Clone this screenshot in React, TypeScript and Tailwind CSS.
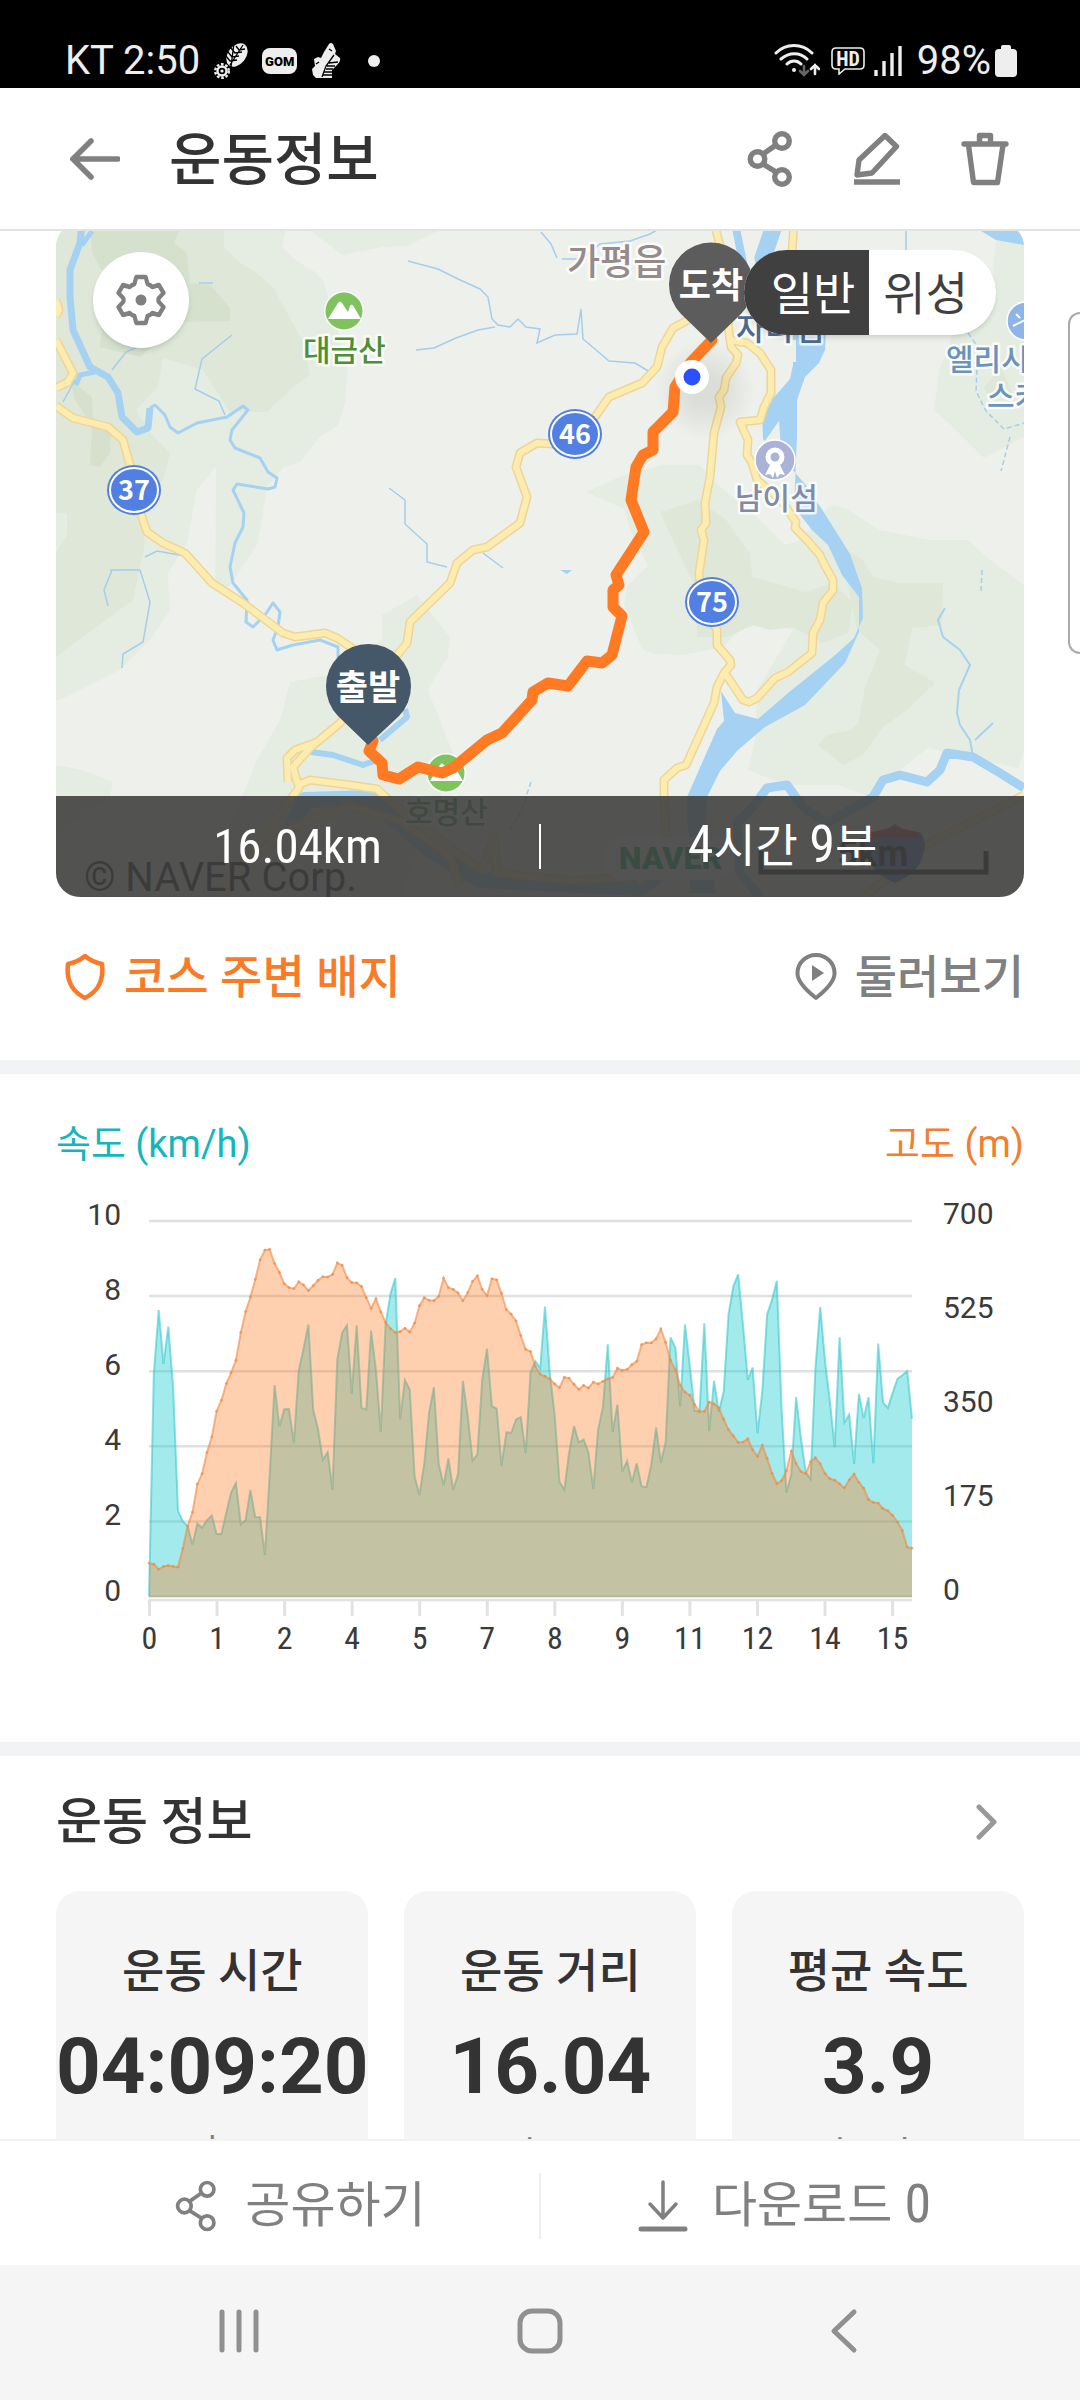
import type { ReactNode } from "react";

const TEXT = "font-['Roboto','Noto_Sans_CJK_KR',sans-serif]";
const NARROW = "font-['Liberation_Sans_Narrow','Roboto_Condensed','Roboto',sans-serif]";

// Samples along the course, measured down from the top of the chart
const SPEED = [
  1366, 755, 578, 726, 623, 790, 1130, 1159, 1172, 1223, 1165, 1177, 1156, 1143, 1194, 1194, 1135, 1080, 1054, 1167,
  1156, 1073, 1147, 1148, 1252, 1030, 784, 898, 851, 850, 944, 745, 685, 618, 852, 905, 990, 968, 1073, 713, 640, 619,
  808, 620, 847, 852, 634, 745, 914, 618, 533, 490, 879, 770, 797, 1035, 1087, 1000, 860, 790, 1000, 1060, 986, 1073,
  1028, 773, 870, 992, 975, 770, 684, 842, 849, 1007, 914, 916, 879, 872, 972, 750, 718, 738, 568, 752, 865, 1050,
  1073, 970, 897, 942, 934, 970, 1070, 907, 845, 672, 914, 838, 1022, 993, 1052, 1000, 1063, 1065, 1005, 901, 997,
  940, 653, 682, 843, 617, 735, 855, 857, 614, 911, 773, 858, 802, 590, 513, 480, 620, 770, 736, 917, 802, 590, 550,
  497, 850, 1080, 1030, 817, 930, 1025, 1043, 740, 570, 720, 830, 955, 653, 887, 865, 1001, 808, 876, 818, 1000, 670,
  832, 847, 805, 767, 757, 746, 877,
];

const ELEVATION = [
  1274, 1277, 1291, 1283, 1281, 1283, 1285, 1234, 1172, 1134, 1057, 1028, 970, 927, 856, 826, 780, 750, 716, 640, 582,
  542, 494, 440, 413, 411, 450, 474, 505, 516, 519, 500, 509, 524, 511, 496, 486, 487, 480, 448, 455, 489, 502, 503,
  513, 544, 573, 547, 583, 612, 629, 640, 637, 628, 638, 614, 566, 544, 551, 552, 540, 490, 516, 521, 531, 552, 530,
  499, 484, 521, 538, 492, 495, 532, 577, 589, 608, 648, 686, 692, 733, 754, 760, 767, 781, 791, 763, 765, 782, 796,
  785, 792, 776, 781, 774, 767, 763, 738, 744, 741, 728, 719, 673, 668, 668, 657, 630, 667, 716, 742, 785, 804, 812,
  838, 857, 857, 831, 836, 847, 878, 907, 924, 942, 941, 932, 962, 980, 950, 986, 1027, 1055, 1047, 1020, 966, 1000,
  1022, 1028, 995, 984, 1001, 1028, 1042, 1046, 1056, 1067, 1045, 1029, 1052, 1068, 1099, 1107, 1109, 1124, 1130,
  1143, 1161, 1184, 1230, 1233,
];

const SAMPLE_SCALE = 2.751;
const LEFT = 149;
const RIGHT = 912;
const BASE = 497;
const X_LABELS = ["0", "1", "2", "4", "5", "7", "8", "9", "11", "12", "14", "15"];
const SPEED_LABELS = ["10", "8", "6", "4", "2", "0"];
const ELEVATION_LABELS = ["700", "525", "350", "175", "0"];

const toPoints = (samples: number[]) =>
  samples.map((value, i) => [LEFT + (i * (RIGHT - LEFT)) / (samples.length - 1), value / SAMPLE_SCALE]);

const toLine = (points: number[][]) => points.map(([x, y]) => `${x.toFixed(1)},${y.toFixed(1)}`).join(" ");

const ShareIcon = ({ className = "", stroke = 5 }: { className?: string; stroke?: number }) => (
  <svg viewBox="0 0 46 56" fill="none" stroke="currentColor" strokeWidth={stroke} className={className}>
    <path d="M16 23 29 14M16 33l13 8" />
    <circle cx="10.5" cy="28" r="7.3" />
    <circle cx="35" cy="10" r="7.3" />
    <circle cx="35" cy="46" r="7.3" />
  </svg>
);

const StatusBar = () => (
  <div className={`flex shrink-0 items-center justify-between bg-black pt-[35px] pr-[63px] pb-px pl-[65px] text-[#eee] ${TEXT}`}>
    <div className="flex items-center">
      <span className="text-[40px] leading-[52px]">KT 2:50</span>
      {/* shoe sole with gear */}
      <svg viewBox="0 0 36 36" className="ml-[14px] h-9 w-9">
        <ellipse cx="23" cy="12" rx="9" ry="13" transform="rotate(38 23 12)" fill="#eee" />
        <path
          d="M17 5l4 5 7-1M14 9l4 5 7-1M12 13l4 5 7-1M22 3l3 4 6-1M20 0l-3 24M29 2 16 22"
          stroke="#000"
          strokeWidth="1.3"
          fill="none"
        />
        <circle cx="8" cy="28" r="4.5" fill="none" stroke="#eee" strokeWidth="2.4" />
        <circle cx="8" cy="28" r="6.8" fill="none" stroke="#eee" strokeWidth="2.4" strokeDasharray="2.6 1.8" />
        <circle cx="8" cy="28" r="1.6" fill="#eee" />
      </svg>
      <span className="ml-3 flex h-[26px] w-[35px] items-center justify-center rounded-lg bg-[#eee] text-[13px] leading-none font-black text-black">
        GOM
      </span>
      {/* running shoe */}
      <svg viewBox="0 0 30 36" className="ml-[15px] h-9 w-[30px]">
        <path d="M17 1q2-2 4 0l3 7-1 3 5 4q1 4-3 7l-5 5v8H4l-3-3-1-6 3-3-1-7 4-2 3 1 3-6z" fill="#eee" />
        <path d="M22 12l-8 11-4 11M17 20l9-1M15 23l8 0M14 26l7 0M12 29l8 0M11 32l9 0M17 6l3 2M4 21l3-2" stroke="#000" strokeWidth="1.3" fill="none" />
      </svg>
      <span className="ml-[26px] h-3 w-3 rounded-full bg-[#eee]" />
    </div>
    <div className="flex items-center">
      <svg viewBox="0 0 46 34" className="h-[34px] w-[46px]" fill="none" stroke="#eee" strokeWidth="3" strokeLinecap="round">
        <path d="M2 9c10-10 26-10 36 0M7 15c8-7 19-7 26 0M13 20c4-4 10-4 14 0" />
        <circle cx="20" cy="26" r="2" fill="#eee" stroke="none" />
        <path d="M30 22v9m-4-4 4 4 4-4" stroke="#666" strokeWidth="2.6" />
        <path d="M41 30v-9m-4 4 4-4 4 4" strokeWidth="2.6" />
      </svg>
      <svg viewBox="0 0 34 28" className="ml-[11px] h-7 w-[34px]">
        <path d="M5 1h24q4 0 4 4v13q0 4-4 4H14l-6 5v-5H5q-4 0-4-4V5q0-4 4-4z" fill="none" stroke="#eee" strokeWidth="1.6" />
        <text x="17" y="19" textAnchor="middle" fontSize="20" fontWeight="700" fill="#eee" className={NARROW}>
          HD
        </text>
      </svg>
      <svg viewBox="0 0 28 30" className="ml-[9px] h-[30px] w-7" stroke="#eee" strokeWidth="3.4">
        <path d="M2 30v-6M10 30V15M18 30V7M26 30V0" />
      </svg>
      <span className="ml-[15px] text-[40px] leading-[52px]">98%</span>
      <svg viewBox="0 0 22 32" className="ml-1 h-8 w-[22px]" fill="#eee">
        <rect x="6" width="10" height="8" rx="2" />
        <rect y="4" width="22" height="28" rx="4" />
      </svg>
    </div>
  </div>
);

const Header = () => (
  <header className="relative z-10 flex shrink-0 items-center border-b-2 border-[#e2e2e2] bg-white py-[31px] pr-[71px] pl-[70px] text-[#808080]">
    <button aria-label="뒤로">
      <svg viewBox="0 0 50 42" className="h-[42px] w-[50px]" fill="none" stroke="currentColor" strokeWidth="5.5" strokeLinecap="round">
        <path d="M21 3 3 21l18 18M4 21h44" />
      </svg>
    </button>
    <h1 className={`ml-[49px] flex-1 pt-1 text-[57px] leading-[75px] font-medium text-[#333] ${TEXT}`}>운동정보</h1>
    <div className="flex items-center gap-[61px]">
      <button aria-label="공유">
        <ShareIcon className="h-14 w-[46px]" stroke={5.4} />
      </button>
      <button aria-label="수정">
        <svg viewBox="0 0 46 54" className="h-[54px] w-[46px]" fill="none" stroke="currentColor" strokeWidth="5.4">
          <path d="M31 3.5 42.5 14.5 18 41 3 43 5 28z" strokeLinejoin="round" />
          <path d="M0 50h46" />
        </svg>
      </button>
      <button aria-label="삭제">
        <svg viewBox="0 0 48 54" className="h-[54px] w-12" fill="none" stroke="currentColor" strokeWidth="5.4" strokeLinejoin="round">
          <path d="M3 12h42" strokeLinecap="round" />
          <path d="M18.5 11V3.5h11V11M7.5 13l5 37.5h24L42 13" />
        </svg>
      </button>
    </div>
  </header>
);

const RouteBadge = ({ x, y, children }: { x: number; y: number; children: ReactNode }) => (
  <g>
    <ellipse cx={x} cy={y} rx="27" ry="25" fill="#527fe2" />
    <ellipse cx={x} cy={y} rx="24" ry="22" fill="none" stroke="#fff" strokeWidth="2" />
    <text x={x} y={y + 10} textAnchor="middle" fontSize="27" fontWeight="700" fill="#fff" className="font-['Noto_Sans_CJK_KR',sans-serif]">
      {children}
    </text>
  </g>
);

const Place = ({ x, y, size = 30, color, children }: { x: number; y: number; size?: number; color: string; children: ReactNode }) => (
  <text x={x} y={y} fontSize={size} fontWeight="500" fill={color} stroke="#fffc" strokeWidth="5" strokeLinejoin="round" paintOrder="stroke">
    {children}
  </text>
);

const Mountain = ({ x, y }: { x: number; y: number }) => (
  <g transform={`translate(${x} ${y})`}>
    <circle r="20" fill="#fffa" />
    <circle r="18.5" fill="#80c35e" />
    <path d="M-16 8-6-8q2-3 4 0l6 9 2-6q2-3 4 1l7 12z" fill="#fff" />
  </g>
);

const ROADS = [
  "M56 300l3 10-3 6M56 340l17 33-5 9-12 6",
  "M56 406l17 12 35 9 15 13 7 25 8 40 9 27 16 11 22 10 27 30 31 20 40 30 12 4 30-4 12 5 15 10 20 20",
  "M688 320l-15 8-11 19-5 20-15 16-33 14-14 20-20 20-22 7-16-1-17 10-4 14 11 30-7 26-33 24-14 3-16 13-7 20-40 39-3 21-14 17-53 63-23 19-22 8-8 8 1 24",
  "M340 723l-30 25-17 19 6 21-19 25-60 84M298 785l12-5 40 5 27 4 23 21 60 45 22 15 12-32 3 35 75 8 60-4 45-30",
  "M250 860l40-32 60-22 50 15 50 35 10 30",
  "M714 223l8 30 7 80 2 14 7 8-2 8-10 15-2 12-5 7 2 10-7 26-4 44-5 26 1 20-5 7 3 10-5 33 3 30 15 27v15l13 15 1 5-7 8-7 14-3 16-28 62-9 3-13 12v16l3 50-10 20-20 15",
  "M725 673l18 27 6 2 8-4 18-20 13-6 24-19 1-20 7-13 3-17 10-13v-10l-10-18-3-7-13-15-12-12 1-6-15-22-24-20-5-17-5-8 1-15-8-18 20-2 4-13 7-14v-23l-11-17-13-10-17-3",
  "M794 223l-2 30-10 30",
  "M1024 795l-90 45-10 8-60 49",
];

const CourseMap = () => (
  <svg viewBox="56 223 968 674" className={`block w-full ${TEXT}`} role="img" aria-label="코스 지도">
    <defs>
      <radialGradient id="dot-shadow">
        <stop offset="0.3" stopColor="#000" stopOpacity="0.08" />
        <stop offset="1" stopColor="#000" stopOpacity="0" />
      </radialGradient>
    </defs>
    <rect x="56" y="223" width="968" height="674" fill="#eef1eb" />

    {/* woodland */}
    <g fill="#e5ede2">
      <path d="M56 223H455L407 246 383 247 342 255 311 231H286L282 247 297 261 315 272 323 280 327 292 348 367 345 403 338 425 320 437 300 462 283 468 267 487 258 543 230 586 215 592 216 467 197 490 187 543 168 573 170 610 150 640 120 670 60 700H56z" />
      <path d="M56 765l27 5 30 12-3 14-54 40zM200 897l57-137 23-40 10-38 37-7 55-35v-25l35-20 33 42-2 20-20 33 25 63-13 47-40 97z" />
      <path d="M619 477l42-12h39l20 22 35 28 30 30 15-5 30-35 15 3 35 22 50 10h38l22 20 34 25v165l-6 18-90-20-60 48-30-11-45 0-20-5-25-10 7-30 2-50 36-60-30-7-23 7-17 17-40 8-30-1-11-5-18-45 3-18 21-20-17-34-7-23-38-17z" />
      <path d="M998 223h26v214l-40 21-31-31-19-17 5-40 14-37 35-23z" />
    </g>
    <g fill="#dee7d8">
      <path d="M56 223H224V247L240 263 253 270 273 287 302 340 310 375 293 387 267 412H230L220 397 203 370 163 358 158 387 136 410 150 433 170 453 163 480 142 520 145 543 133 600 56 657V552L67 535V513H56z" />
      <path d="M660 512l38-12 28 20 24 33 2 24 22 6 31 9 28-9 20 20-5 30-25 10-30-16-23 3-17-5-26 12h-30v-47l-22-45z" />
      <path d="M840 547l23 13 10 17 27 6h43l-1 42-30 3-7 37 30 18-28 27-24 17-20 28-20 10-25-20 9-10 23-5 8-7 7-36 15-37-23-20z" />
      <path d="M984 387l17-20 11 26-22 7z" />
    </g>
    <g fill="#d5e1cd">
      <path d="M90 223h92l-8 20 13 10 3 30 20 2 20 23v13l-50 1-40 35-40-10 5-70-13-25zM70 380l22 17 1 23 18 7-1 26-10 14-10-2 2-40-17-25z" />
    </g>

    {/* rivers */}
    <g fill="none" stroke="#a5d2f2" strokeLinejoin="round">
      <path d="M82 223l-2 20-10 27v27l3 33 17 37 18 10 10 16 4 24 15 15 11-4 2-20" strokeWidth="7" />
      <path d="M82 245l10-14M95 372l-15 3-4 10" strokeWidth="5" />
      <path
        d="M150 408l5-3 10 10 5 12 8 6 19-10 30-6 16-11 5 4-16 20-2 10 5 8 25 10 8 14 9 6-2 9-7 2-31-5-4 6 11 23-1 14-8 16-5 24 3 16 14 17-1 22 7 5 12-12 8-12 7 9-2 15-5 13 4 10 16-5 27-5 18 7v12"
        strokeWidth="3"
      />
      <path d="M1024 788l-24-15-27-16-26-4-7 17-13 12-27-7-17 5-10 17-23 13-23 13-24-16-16-22-20 3-14 19-16 16 3 50 20 24" strokeWidth="9" />
      <path d="M973 757l-3-17-10-15-3-12 2-23 11-25-10-15-17-13-5-17 7-12M975 740l18-17" strokeWidth="2" />
      <path d="M311 752l22 3 30 10 14-5M380 740l27-23-2-8" strokeWidth="6" />
      <path d="M735 223l8 40 10 20" strokeWidth="8" />
      <path d="M775 223l-12 35 8 25" strokeWidth="17" />
      <path d="M290 830l15-30 65-2 60 52 50 30 160 8 40-30" strokeWidth="16" />
    </g>
    <g fill="#a5d2f2">
      <path d="M772 330h54l-1 20-6 13-14 14-8 23v37l-3 70 18 23 16 15 14 30 17 22v35l-14 31-40 42-40 22-28 24-17 20-13 26-1 26 10 70h-27l4-40-6-30v-26l30-68 7-8-3-30 14 22 23 6 30-26 46-37 20-18 9-20-1-30-12-34-25-40-20-30-22-25-20-20-1-30 14-14 14-16 3-14 0-30z" />
      <path d="M981 231l15 9 28 5v-22h-40zM560 570l12 0-5 4z" />
    </g>
    <path d="M779 421l-17 24-5 20 25 13-1-30zM790 340h6v22h-6z" fill="#eef1eb" />
    <g fill="none" stroke="#a5cdec" strokeWidth="1.5">
      <path d="M408 261l30 8 20 10 22 10 8 8 4 22 6 6 12 2 8-8 8 8 14 2-3 14 18-8 22-1 4-25 2 30 12 10 14 12 26 2 20 12M416 350l18-2 22-10 22-8 17-3M389 488l16 12v24l22 20v18l20 5M483 553l20 15M199 283h14M232 335l-30 24-7 30 24 12 6 14M112 370l14-18 16-7M63 402l12-22M145 557l12-6 28 5M110 570l30 0 10 32-7 40-20 12-1 14M112 570l-8 20 4 16M541 232l10 12 6 14M562 259h20l18-15 30-3 20-7 14-8M906 223v28l8 20" />
      <path d="M968 333l10 14-2 44 10 20 18 18 20-6M1010 437l-9 34M982 570l-1 22M531 782l-10 30-11 18" strokeDasharray="5 3" />
    </g>

    {/* roads */}
    <g fill="none" strokeLinejoin="round">
      {ROADS.map((d) => (
        <path key={d} d={d} stroke="#efd595" strokeWidth="9" />
      ))}
      {ROADS.map((d) => (
        <path key={d} d={d} stroke="#fdecb0" strokeWidth="6" />
      ))}
    </g>

    <RouteBadge x={134} y={490}>37</RouteBadge>
    <RouteBadge x={575} y={434}>46</RouteBadge>
    <RouteBadge x={712} y={602}>75</RouteBadge>

    <Mountain x={344} y={311} />
    <Mountain x={446} y={773} />
    <circle cx="775" cy="460" r="20" fill="#aab2d8" stroke="#fff" strokeWidth="1.5" />
    <path d="M770 465l-5 10 5-1 3 4 2-7 2 7 3-4 5 1-5-10z" fill="#fff" />
    <circle cx="775" cy="457" r="7" fill="none" stroke="#fff" strokeWidth="5" />
    <circle cx="1026" cy="321" r="19" fill="#8fb5e8" stroke="#fff" strokeWidth="1.5" />
    <path d="M1013 326l12-6M1016 314l4 4" stroke="#fff" strokeWidth="2" />

    <Place x={567} y={275} size={36} color="#958b8b">가평읍</Place>
    <Place x={303} y={361} color="#4c8f36">대금산</Place>
    <Place x={405} y={823} color="#4c8f36">호명산</Place>
    <Place x={735} y={509} color="#7f8ba8">남이섬</Place>
    <Place x={736} y={340} size={32} color="#4b6a90">자라섬</Place>
    <Place x={946} y={370} color="#6a92be">엘리시안</Place>
    <Place x={987} y={407} color="#6a92be">스키장</Place>

    {/* provider marks */}
    <rect x="604" y="837" width="130" height="43" rx="21" fill="#fff" />
    <text x="619" y="869" fontSize="32" fontWeight="900" fill="#03a94d">
      NAVER
    </text>
    <path d="M870 832q10 3 25-8 15 11 25 8 8 10 3 22-3 18-28 29-25-11-28-29-5-12 3-22z" fill="#5577c8" />
    <path d="M872 838h46v-6l-23-5-23 5z" fill="#d04040" />
    <path d="M761 851v21h225v-21" fill="none" stroke="#111" strokeWidth="5" />
    <text x="873" y="866" textAnchor="middle" fontSize="36" fontWeight="700" fill="#111">
      5km
    </text>
    <text x="84" y="891" fontSize="40" fill="#111">
      © NAVER Corp.
    </text>

    {/* recorded course */}
    <circle cx="705" cy="390" r="50" fill="url(#dot-shadow)" />
    <path
      d="M373 741l-4 10 13 12 1 12 16 4 19-12 24 6 11-5 34-28 15-7 30-33 1-8 15-9 20 3 19-25 15 2 10-8 10-39-9-9v-17l6-5-3-10 28-43-13-32 5-33 7-12 10-5v-18l20-20 2-25 16-25 21-22"
      fill="none"
      stroke="#ff7a22"
      strokeWidth="11"
      strokeLinejoin="round"
      strokeLinecap="round"
    />
    <circle cx="692" cy="377" r="17" fill="#fff" />
    <circle cx="692" cy="377" r="8.5" fill="#2b50ff" />

    <g textAnchor="middle" fontWeight="700" fontSize="35">
      <path d="M368 745l-30-29a42.5 42.5 0 1 1 61 0z" fill="#45586a" />
      <text x="368" y="700" fill="#fff">출발</text>
      <path d="M711 343l-30-29a42 42 0 1 1 60 0z" fill="#5c5c5c" />
      <text x="711" y="298" fill="#fff">도착</text>
    </g>
  </svg>
);

const MapCard = () => (
  <section className="relative mx-14 -mt-2 overflow-hidden rounded-[24px]">
    <CourseMap />
    <button
      aria-label="지도 설정"
      className="absolute top-[29px] left-[37px] flex h-24 w-24 items-center justify-center rounded-full bg-white text-[#808080] shadow-md"
    >
      <svg viewBox="0 0 50 52" className="h-[52px] w-[50px]" fill="none" stroke="currentColor" strokeWidth="4.5" strokeLinejoin="round">
        <path d="M20 3h10l2 7q3 1 5 3l7-2 5 8-5 5q-1 2 0 4l5 5-5 8-7-2q-2 2-5 3l-2 7H20l-2-7q-3-1-5-3l-7 2-5-8 5-5q1-2 0-4l-5-5 5-8 7 2q2-2 5-3z" transform="translate(1.5 0) scale(.94 1)" />
        <circle cx="25" cy="26" r="5.5" fill="currentColor" stroke="none" />
      </svg>
    </button>
    <div className={`absolute top-[27px] right-7 flex overflow-hidden rounded-full bg-white text-[46px] leading-[81px] shadow-md ${TEXT}`}>
      <button className="bg-[#404040] pt-1 pr-[14px] pl-[27px] text-white">일반</button>
      <button className="pt-1 pr-7 pl-[14px] text-[#404040]">위성</button>
    </div>
    <div className={`absolute inset-x-0 bottom-0 flex items-center bg-[#404040]/90 py-[18px] text-[46px] leading-[65px] text-white ${TEXT}`}>
      <p className={`flex-1 text-center text-[49px] ${NARROW}`}>16.04km</p>
      <span className="h-[45px] w-[2px] bg-white" />
      <p className="flex-1 text-center">
        <span className={`text-[52px] leading-none ${NARROW}`}>4</span>시간{" "}
        <span className={`text-[52px] leading-none ${NARROW}`}>9</span>분
      </p>
    </div>
  </section>
);

const BadgeRow = () => (
  <div className={`flex items-center justify-between pt-[52px] pr-14 pb-[55px] pl-16 text-[46px] leading-[56px] font-medium ${TEXT}`}>
    <button className="flex items-center gap-[18px] text-[#f97b28]">
      <svg viewBox="0 0 42 48" className="h-12 w-[42px]" fill="none" stroke="currentColor" strokeWidth="4.5" strokeLinejoin="round">
        <path d="M21 3q7 6 17 8 3 24-17 34Q1 35 4 11q10-2 17-8z" />
      </svg>
      코스 주변 배지
    </button>
    <button className="flex items-center gap-[18px] text-[#808080]">
      <svg viewBox="0 0 42 48" className="h-12 w-[42px]" fill="none" stroke="currentColor" strokeWidth="4" strokeLinejoin="round">
        <path d="M21 45Q2 30 2.5 20a18.5 18 0 0 1 37 0Q40 30 21 45z" />
        <path d="M17 12v16l12-8z" fill="currentColor" stroke="none" />
      </svg>
      둘러보기
    </button>
  </div>
);

const Chart = () => {
  const speed = toPoints(SPEED);
  const elevation = toPoints(ELEVATION);
  const closing = ` ${RIGHT},${BASE} ${LEFT},${BASE}`;

  return (
    <section className="px-14 pt-[49px] pb-[66px]">
      <div className={`flex justify-between text-[38px] leading-[43px] ${TEXT}`}>
        <h2 className="text-[#14b5bd]">속도 (km/h)</h2>
        <h2 className="text-[#f08030]">고도 (m)</h2>
      </div>
      <svg viewBox="56 66 968 510" className="block w-full" role="img" aria-label="속도와 고도">
        {SPEED_LABELS.map((label, i) => (
          <g key={label}>
            <line x1={LEFT} x2={RIGHT} y1={121 + i * 75.1} y2={121 + i * 75.1} stroke="#e0e0e0" strokeWidth="2.5" />
            <text x="121" y={125 + i * 75.1} textAnchor="end" fontSize="30" fill="#3a3a3a" className={TEXT}>
              {label}
            </text>
          </g>
        ))}
        {ELEVATION_LABELS.map((label, i) => (
          <text key={label} x="943" y={124 + i * 94} fontSize="30" fill="#3a3a3a" className={TEXT}>
            {label}
          </text>
        ))}
        <line x1={LEFT} x2={RIGHT} y1="500" y2="500" stroke="#e2e2e2" strokeWidth="2.5" />
        {X_LABELS.map((label, i) => (
          <g key={label}>
            <line x1={149.5 + i * 67.55} x2={149.5 + i * 67.55} y1="500" y2="516" stroke="#e2e2e2" strokeWidth="3" />
            <text x={149.5 + i * 67.55} y="549" textAnchor="middle" fontSize="32" fill="#3a3a3a" className={NARROW}>
              {label}
            </text>
          </g>
        ))}
        <polygon points={toLine(speed) + closing} fill="#2aced3" fillOpacity=".43" />
        <polyline points={toLine(speed)} fill="none" stroke="#2fc4ca" strokeOpacity=".55" strokeWidth="2" />
        <polygon points={toLine(elevation) + closing} fill="#ff791d" fillOpacity=".35" />
        <polyline points={toLine(elevation)} fill="none" stroke="#f08a45" strokeOpacity=".6" strokeWidth="2" />
        {elevation.map(([x, y]) => (
          <circle key={x} cx={x} cy={y} r="1.4" fill="#f08a45" fillOpacity=".7" />
        ))}
      </svg>
    </section>
  );
};

interface StatProps {
  label: string;
  value: string;
  unit: string;
  className?: string;
}

const Stat = ({ label, value, unit, className = "flex-1" }: StatProps) => (
  <div className={`flex flex-col items-center rounded-[24px] bg-[#f5f5f5] pt-[52px] pb-12 ${className} ${TEXT}`}>
    <p className="text-[46px] leading-[56px] font-medium text-[#333]">{label}</p>
    <p className="mt-7 text-[78px] leading-[80px] font-bold text-[#333]">{value}</p>
    <p className="mt-[22px] text-[36px] leading-[48px] text-[#808080]">{unit}</p>
  </div>
);

const WorkoutInfo = () => (
  <section className="px-14 pt-9">
    <div className="flex items-center justify-between pr-[26px]">
      <h2 className={`text-[50px] leading-[60px] font-medium text-[#333] ${TEXT}`}>운동 정보</h2>
      <button aria-label="운동 정보 더보기">
        <svg viewBox="0 0 22 36" className="h-9 w-[22px]" fill="none" stroke="#999" strokeWidth="5" strokeLinecap="round" strokeLinejoin="round">
          <path d="M3 3l15 15L3 33" />
        </svg>
      </button>
    </div>
    <div className="mt-[39px] flex gap-9">
      <Stat label="운동 시간" value="04:09:20" unit="초" className="shrink-0" />
      <Stat label="운동 거리" value="16.04" unit="km" />
      <Stat label="평균 속도" value="3.9" unit="km/h" />
    </div>
  </section>
);

const ActionBar = () => (
  <div className={`flex shrink-0 items-center border-t-2 border-[#f2f2f2] bg-white px-14 pt-8 pb-[26px] text-[49px] leading-[66px] text-[#808080] ${TEXT}`}>
    <button className="flex flex-1 items-center justify-center gap-[26px] pl-1">
      <ShareIcon className="h-[52px] w-[46px]" stroke={4} />
      공유하기
    </button>
    <span className="h-[66px] w-[2px] bg-[#eee]" />
    <button className="flex flex-1 items-center justify-center gap-[24px] pl-1">
      <svg viewBox="0 0 50 52" className="h-[52px] w-[50px]" fill="none" stroke="currentColor" strokeWidth="3.5" strokeLinecap="round" strokeLinejoin="round">
        <path d="M25 2v35M12 24l13 14 13-14" />
        <path d="M3 49h44" strokeWidth="5" />
      </svg>
      <span>
        다운로드 <span className={`text-[54px] leading-none ${NARROW}`}>0</span>
      </span>
    </button>
  </div>
);

const SystemNav = () => (
  <nav className="grid shrink-0 grid-cols-3 justify-items-center bg-[#f5f5f5] px-[88px] pt-[42px] pb-[45px] text-[#909090]">
    <button aria-label="최근 앱">
      <svg viewBox="0 0 48 48" className="h-12 w-12" stroke="currentColor" strokeWidth="5" strokeLinecap="round">
        <path d="M7 5v38M24 5v38M41 5v38" />
      </svg>
    </button>
    <button aria-label="홈">
      <svg viewBox="0 0 48 48" className="h-12 w-12" fill="none" stroke="currentColor" strokeWidth="5">
        <rect x="4" y="4" width="40" height="40" rx="12" />
      </svg>
    </button>
    <button aria-label="뒤로 가기">
      <svg viewBox="0 0 48 48" className="h-12 w-12" fill="none" stroke="currentColor" strokeWidth="5" strokeLinecap="round" strokeLinejoin="round">
        <path d="M37 5 17 24l20 19" />
      </svg>
    </button>
  </nav>
);

export default function App() {
  return (
    <div className="relative flex h-screen flex-col overflow-hidden bg-white">
      <StatusBar />
      <Header />
      <main className="min-h-0 flex-1 overflow-hidden">
        <MapCard />
        <BadgeRow />
        <hr className="h-[14px] border-0 bg-[#f1f3f5]" />
        <Chart />
        <hr className="h-[14px] border-0 bg-[#f1f3f5]" />
        <WorkoutInfo />
      </main>
      <ActionBar />
      <SystemNav />
      {/* edge panel handle */}
      <div className="absolute top-[312px] right-0 h-[342px] w-3 rounded-l-xl border-2 border-r-0 border-[#aaa] bg-white" />
    </div>
  );
}
